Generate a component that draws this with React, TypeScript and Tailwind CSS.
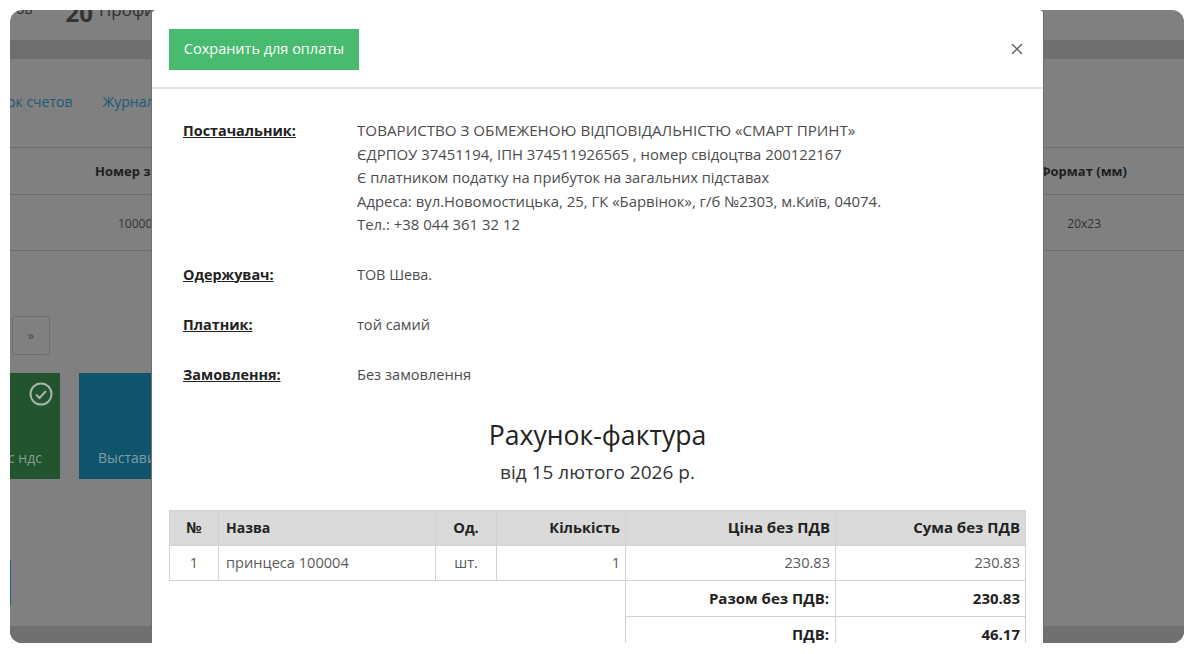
import React from "react";

const font = { fontFamily: '"Open Sans", "Noto Sans", sans-serif' };

function Party({ label, lines, className }: { label: string; lines: { t: string; c: string }[]; className: string }) {
  return (
    <div className={`flex ${className}`}>
      <div className="w-[174px] shrink-0 text-[14.4px] leading-[24px] font-bold text-[#222] underline">{label}</div>
      <div className="leading-[23.5px] text-[#4c4c4c] whitespace-nowrap">
        {lines.map((l) => (
          <div key={l.t} className={l.c}>
            {l.t}
          </div>
        ))}
      </div>
    </div>
  );
}

export default function App() {
  const th = "border border-[#d0d3d6] bg-[#dadada] px-[5px] h-[35px] font-bold text-[#222]";
  const td = "border border-[#d0d3d6] px-[5px] h-[35px] text-[14.6px] text-[#5a5a5a]";
  const tot = "border border-[#d0d3d6] pl-[5px] pr-[5px] h-[36px] text-[15px] font-bold text-[#222] text-right";
  return (
    <div className="w-[1194px] h-[654px] bg-white p-[10px] pb-[11px] overflow-hidden" style={font}>
      <div className="relative h-full overflow-hidden rounded-[12px] bg-[#808080]">
        {/* dimmed page */}
        <div className="flex h-[30px] items-start text-[#2f2f2f]">
          <div className="ml-[6px] mt-[-12px] text-[14px]">ов</div>
          <div className="ml-[33px] mt-[-15px] text-[24px] font-bold text-[#333]">20</div>
          <div className="ml-[6px] mt-[-13px] text-[17px]">Профиль</div>
        </div>
        <div className="h-[19px] bg-[#6f6f6f]" />
        <div className="flex h-[88px] items-center gap-[30px] pb-[3px] text-[14px] text-[#1d5a78]">
          <span className="ml-[-36px]">Список счетов</span>
          <span>Журнал</span>
        </div>
        <div className="flex h-[48px] items-center justify-between border-y border-[#6c6c6c] pt-[1px] text-[13px] font-bold text-[#1e1e1e]">
          <span className="ml-[85px]">Номер заказа</span>
          <span className="mr-[57px]">Формат (мм)</span>
        </div>
        <div className="flex h-[56px] items-center justify-between border-b border-[#6c6c6c] pt-[2px] text-[12px] text-[#333]">
          <span className="ml-[108px]">100004</span>
          <span className="mr-[83px]">20x23</span>
        </div>
        <div className="mt-[65px] ml-[2px] flex h-[39px] w-[38px] items-center justify-center rounded-[3px] border border-[#6e6e6e] text-[12px] text-[#444]">
          »
        </div>
        <div className="mt-[18px] flex h-[106px] gap-[19px] text-[14px] text-[#8a9a94]">
          <div className="relative flex w-[50px] items-end overflow-hidden bg-[#21542f] pb-[11px]">
            <span className="ml-[-2px] whitespace-nowrap text-[#84a08c]">с ндс</span>
            <svg className="absolute right-[7px] top-[9px]" width="24" height="24" viewBox="0 0 24 24" fill="none" stroke="#a9b5a9" strokeWidth="2">
              <circle cx="12" cy="12" r="10.5" />
              <path d="M7 12.5l3.5 3.5L17 9" />
            </svg>
          </div>
          <div className="flex w-[120px] items-end bg-[#10546c] pb-[11px] pl-[19px] text-[#7d9ea9]">Выставить</div>
        </div>
        <div className="mt-[81px] h-[45px] w-[1px] bg-[#0f6b77]" />
        <div className="mt-[21px] h-[17px] bg-[#707070]" />

        {/* modal */}
        <div className="absolute left-[142px] top-0 h-[700px] w-[891px] rounded-t-[4px] bg-white shadow-[0_0_0_1px_#6f6f6f]">
          <div className="flex h-[79px] items-center justify-between border-b-2 border-[#e2e2e2] pl-[17px] pr-[20px] pt-[1px]">
            <button className="flex h-[41px] w-[190px] items-center justify-center bg-[#48bb70] text-[14.5px] text-white">
              Сохранить для оплаты
            </button>
            <span className="text-[#666]">
              <svg width="12" height="12" viewBox="0 0 12 12" stroke="currentColor" strokeWidth="1.5" fill="none">
                <path d="M1 1l10 10M11 1L1 11" />
              </svg>
            </span>
          </div>
          <div className="px-[17px] pt-[30px]">
            <div className="pl-[14px]">
              <Party
                label="Постачальник:"
                className=""
                lines={[
                  { t: "ТОВАРИСТВО З ОБМЕЖЕНОЮ ВІДПОВІДАЛЬНІСТЮ «СМАРТ ПРИНТ»", c: "text-[15.17px]" },
                  { t: "ЄДРПОУ 37451194, ІПН 374511926565 , номер свідоцтва 200122167", c: "text-[14.9px]" },
                  { t: "Є платником податку на прибуток на загальних підставах", c: "text-[14.65px]" },
                  { t: "Адреса: вул.Новомостицька, 25, ГК «Барвінок», г/б №2303, м.Київ, 04074.", c: "text-[14.9px]" },
                  { t: "Тел.: +38 044 361 32 12", c: "text-[14.9px]" },
                ]}
              />
              <Party label="Одержувач:" className="mt-[26px]" lines={[{ t: "ТОВ Шева.", c: "text-[14.4px]" }]} />
              <Party label="Платник:" className="mt-[26px]" lines={[{ t: "той самий", c: "text-[14.6px]" }]} />
              <Party label="Замовлення:" className="mt-[26px]" lines={[{ t: "Без замовлення", c: "text-[14.6px]" }]} />
            </div>
            <div className="mt-[31px] text-center text-[26.6px] leading-[34px] text-[#222]">Рахунок-фактура</div>
            <div className="mt-[6px] text-center text-[19px] leading-[28px] text-[#333]">від 15 лютого 2026 р.</div>
            <table className="mt-[24px] w-[856px] table-fixed border-collapse">
              <colgroup>
                <col className="w-[49px]" />
                <col className="w-[217px]" />
                <col className="w-[61px]" />
                <col className="w-[129px]" />
                <col className="w-[210px]" />
                <col className="w-[190px]" />
              </colgroup>
              <thead>
                <tr>
                  <th className={`${th} text-center text-[15px]`}>№</th>
                  <th className={`${th} pl-[7px] text-left text-[14px]`}>Назва</th>
                  <th className={`${th} text-center text-[14.6px]`}>Од.</th>
                  <th className={`${th} text-right text-[14.6px]`}>Кількість</th>
                  <th className={`${th} text-right text-[15px]`}>Ціна без ПДВ</th>
                  <th className={`${th} text-right text-[15px]`}>Сума без ПДВ</th>
                </tr>
              </thead>
              <tbody>
                <tr>
                  <td className={`${td} text-center`}>1</td>
                  <td className={`${td} pl-[7px]`}>принцеса 100004</td>
                  <td className={`${td} text-center`}>шт.</td>
                  <td className={`${td} text-right`}>1</td>
                  <td className={`${td} text-right`}>230.83</td>
                  <td className={`${td} text-right`}>230.83</td>
                </tr>
                <tr>
                  <td colSpan={4} rowSpan={2} />
                  <td className={`${tot} pr-[6px]`}>Разом без ПДВ:</td>
                  <td className={tot}>230.83</td>
                </tr>
                <tr>
                  <td className={`${tot} pr-[6px]`}>ПДВ:</td>
                  <td className={tot}>46.17</td>
                </tr>
              </tbody>
            </table>
          </div>
        </div>
      </div>
    </div>
  );
}
